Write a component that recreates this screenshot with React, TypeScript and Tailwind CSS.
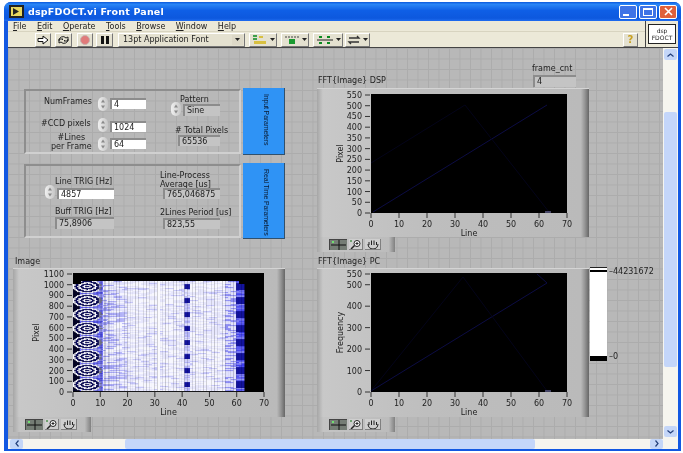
import type { ReactNode } from "react";

const FONT = "font-['DejaVu_Sans',sans-serif]";

// Hash noise so the intensity graph looks the same on each render
const noise = (a: number, b: number) => {
  const s = Math.sin(a * 12.9898 + b * 78.233) * 43758.5453;
  return s - Math.floor(s);
};

const ramp = (v: number) => {
  if (v < 0) return "rgb(128,128,146)"; // grey band next to the lobes
  // 0 = white, 0.7 = strong blue, 1 = near black
  if (v < 0.7) {
    const t = v / 0.7;
    return `rgb(${Math.round(250 - t * 222)},${Math.round(250 - t * 222)},${Math.round(255 - t * 20)})`;
  }
  const t = (v - 0.7) / 0.3;
  return `rgb(${Math.round(28 - t * 22)},${Math.round(28 - t * 22)},${Math.round(235 - t * 195)})`;
};

const intensity = (col: number, row: number) => {
  const period = 14;
  const phase = ((row + 1) % period) - 7; // -7..7, row counted from the bottom
  const blob = noise(Math.floor(col / 3 + noise(row, 7) * 3), row); // thin flat streaks
  if (col < 11) {
    const d = Math.sqrt(((col - 5) / 5.5) ** 2 + (phase / 6.5) ** 2);
    if (d > 1) return col < 2.5 ? 1 : 0.25 + blob * 0.3;
    if (col >= 9.5) return Math.abs(phase) < 5 && blob > 0.25 ? -1 : 0.3;
    return Math.cos(d * 17) > 0 ? 0.92 : 0.01;
  }
  const c = Math.floor(col);
  if (c === 31) return 0;
  if (c >= 41 && c <= 42) return Math.abs(phase) < 2.5 ? 0.82 : 0.05 + blob * 0.2;
  if (c >= 60) return Math.abs(phase) < 4 ? 0.82 : 0.3 + blob * 0.3;
  if (c >= 56) return blob < 0.4 ? 0.34 : 0.08;
  if (c < 20) return blob < 0.3 ? 0.3 - (c - 11) * 0.012 : blob < 0.7 ? 0.08 : 0.01;
  return blob < 0.12 ? 0.17 : blob < 0.6 ? 0.06 : 0.01;
};

const cells: { x: number; y: number; w: number; c: string }[] = [];
for (let col = 0; col < 63; col += col < 14 ? 0.5 : 1) {
  const w = col < 14 ? 1.36 : 2.72;
  for (let row = 0; row < 110; row++) {
    if (row > 106 && (col < 3 || col > 60)) continue;
    cells.push({ x: col * 2.72, y: row, w, c: ramp(intensity(col, row)) });
  }
}

type GraphProps = {
  className: string;
  yLabel: string;
  plotX: number;
  plotY: number;
  plotW: number;
  yTicks: { v: number; y: number }[];
  children?: ReactNode;
};

const PLOT_H = 119;
const xValues = [0, 10, 20, 30, 40, 50, 60, 70];

const Graph = ({ className, yLabel, plotX, plotY, plotW, yTicks, children }: GraphProps) => {
  const bottom = plotY + PLOT_H;
  const mid = plotX + plotW / 2;
  const labelX = 22.5;
  const labelY = plotY + PLOT_H / 2;
  return (
    <div
      className={`absolute h-[149px] w-[272px] border-t border-t-[#d4d4d4] bg-[linear-gradient(90deg,#a6a6a6_0,#c8c8c8_6px,#bebebe_40%,#bababa_97%,#949494_98.5%,#666_100%)] ${className}`}
    >
      <svg width="272" height="148" className="block" fontFamily="'DejaVu Sans',sans-serif" fontSize="8" fill="#222">
        <rect x={plotX} y={plotY} width={plotW} height={PLOT_H} fill="#000" />
        <g transform={`translate(${plotX} ${plotY})`}>{children}</g>
        {yTicks.map((t) => (
          <g key={t.v}>
            <line x1={plotX - 6} x2={plotX - 1} y1={plotY + t.y + 0.5} y2={plotY + t.y + 0.5} stroke="#333" />
            <text x={plotX - 9} y={plotY + t.y + 3.5} textAnchor="end">
              {t.v}
            </text>
          </g>
        ))}
        {xValues.map((v) => {
          const x = plotX + (v / 70) * plotW;
          return (
            <g key={v}>
              <line x1={x} x2={x} y1={bottom} y2={bottom + 5} stroke="#333" />
              <text x={x} y={bottom + 14} textAnchor="middle">
                {v}
              </text>
            </g>
          );
        })}
        <text x={mid} y={bottom + 23} textAnchor="middle">
          Line
        </text>
        <text x={labelX} y={labelY} textAnchor="middle" transform={`rotate(-90 ${labelX} ${labelY})`} dy="3">
          {yLabel}
        </text>
      </svg>
    </div>
  );
};

// Graph palette: cursor, zoom and hand buttons
const Palette = ({ className }: { className: string }) => (
  <div
    className={`absolute flex h-[15px] w-[78px] items-center gap-[2px] bg-[linear-gradient(90deg,#a8a8a8_0,#c4c4c4_8%,#bcbcbc_92%,#808080_100%)] pl-[12px] ${className}`}
  >
    <span className="h-[11px] w-[18px] border-t border-l border-t-[#444] border-l-[#444] bg-[#757d75]">
      <svg width="17" height="10" className="block">
        <path d="M9 0v10M1 5h15" stroke="#111" />
        <rect x="2" y="1" width="2" height="2" fill="#6fe06f" />
      </svg>
    </span>
    <span className="h-[11px] w-[14px] border-r border-b border-r-[#808080] border-b-[#808080] bg-[#cfcfcf]">
      <svg width="13" height="10" className="block">
        <circle cx="8" cy="4.5" r="3" fill="#fff" stroke="#222" />
        <path d="M5.5 6.5 2 10" stroke="#222" strokeWidth="1.5" />
        <path d="M6.5 4.5h3M8 3v3" stroke="#222" />
        <rect x="1" y="1" width="2" height="2" fill="#6fa06f" />
      </svg>
    </span>
    <span className="h-[11px] w-[16px] border-r border-b border-r-[#808080] border-b-[#808080] bg-[#cfcfcf]">
      <svg width="15" height="10" className="block">
        <path d="M4 6V3M6.5 6V1.5M9 6V1.5M11.5 6V3M3 5c0 3 2 5 5 5s5-2 5-5" fill="none" stroke="#222" />
      </svg>
    </span>
  </div>
);

const Spinner = ({ className }: { className: string }) => (
  <div className={`absolute h-[14px] w-[10px] rounded-full bg-[linear-gradient(90deg,#f0f0f0,#c6c6c6)] ${className}`}>
    <svg width="10" height="14" className="block">
      <path d="M5 2.5 3 5.5h4zM5 11.5 3 8.5h4z" fill="#8a8a8a" />
    </svg>
  </div>
);

const Field = ({ className, value, indicator }: { className: string; value: string; indicator?: boolean }) => (
  <div
    className={`absolute flex items-center border-t-2 border-l-2 border-t-[#8c8c8c] border-l-[#8c8c8c] pl-[2px] text-[8px] leading-none text-[#222] ${
      indicator ? "bg-[#c4c4c4]" : "bg-white"
    } ${className}`}
  >
    {value}
  </div>
);

const Label = ({ className, children }: { className: string; children: ReactNode }) => (
  <div className={`absolute whitespace-nowrap text-[8px] leading-[8.5px] text-[#222] ${className}`}>{children}</div>
);

const Tab = ({ className, children }: { className: string; children: string }) => (
  <div
    className={`absolute w-[42px] border-r border-b border-r-[#30506c] border-b-[#30506c] bg-[#2f93f5] pt-[6px] ${className}`}
  >
    <div className="ml-[19px] font-['Liberation_Sans',sans-serif] text-[7px] leading-[8px] tracking-[-0.15px] whitespace-nowrap text-[#0a1a30] [writing-mode:vertical-rl]">
      {children}
    </div>
  </div>
);

const ToolButton = ({ className, children }: { className: string; children: ReactNode }) => (
  <div
    className={`flex h-[14px] items-center justify-center border border-t-white border-l-white border-r-[#777] border-b-[#777] bg-[#e4e1d0] ${className}`}
  >
    {children}
  </div>
);

const Caret = () => (
  <svg width="5" height="3" className="ml-[2px]">
    <path d="M0 0h5L2.5 3z" fill="#222" />
  </svg>
);

const imageTicks = [1100, 1000, 900, 800, 700, 600, 500, 400, 300, 200, 100, 0].map((v) => ({
  v,
  y: 118.5 - (v / 1100) * 118,
}));
const dspTicks = [550, 500, 450, 400, 350, 300, 250, 200, 150, 100, 50, 0].map((v) => ({
  v,
  y: 118.5 - (v / 550) * 118,
}));
const pcTicks = [550, 500, 400, 300, 200, 100, 0].map((v) => ({
  v,
  y: 118.5 - (v / 550) * 118,
}));

const menuItems = ["File", "Edit", "Operate", "Tools", "Browse", "Window", "Help"];

export default function App() {
  return (
    <div className={`h-[453px] w-[683px] overflow-hidden bg-white pt-[2px] pr-[2px] pb-[2px] pl-[4px] ${FONT} blur-[0.4px]`}>
      <div className="flex h-full flex-col rounded-t-[7px] bg-[#1258e2] pr-[3px] pb-[2px] pl-[4px]">
        {/* Title bar */}
        <div className="-ml-[4px] -mr-[3px] flex h-[19px] shrink-0 items-center rounded-t-[7px] bg-[linear-gradient(180deg,#0a58dc,#2a86f6_12%,#0f5fe6_45%,#0d58de_85%,#1f6cf0)] pl-[5px]">
          <svg width="15" height="13" className="mr-[4px]">
            <rect width="15" height="13" fill="#222" />
            <rect x="2" y="2" width="11" height="9" fill="#e8d860" />
            <path d="M4 3l6 3.5L4 10z" fill="#222" />
          </svg>
          <span className="text-[9.5px] leading-none font-bold tracking-[0.2px] text-white">dspFDOCT.vi Front Panel</span>
          <div className="ml-auto mr-[4px] flex gap-[2px]">
            <span className="flex h-[14px] w-[18px] items-end rounded-[2px] border border-white bg-[#3f73e6] pb-[2px] pl-[3px]">
              <span className="h-[2px] w-[6px] bg-white" />
            </span>
            <span className="flex h-[14px] w-[18px] items-center justify-center rounded-[2px] border border-white bg-[#3f73e6]">
              <span className="h-[8px] w-[10px] border border-t-2 border-white" />
            </span>
            <span className="flex h-[14px] w-[18px] items-center justify-center rounded-[2px] border border-white bg-[#e0603a]">
              <svg width="9" height="9">
                <path d="M1 1l7 7M8 1 1 8" stroke="#fff" strokeWidth="1.6" />
              </svg>
            </span>
          </div>
        </div>

        {/* Menu and toolbar with the VI icon on the right */}
        <div className="flex h-[27px] shrink-0 border-b border-b-[#444] bg-[#ece9d8]">
          <div className="flex min-w-0 flex-1 flex-col">
            <div className="flex h-[11px] items-center gap-[10.5px] border-b border-b-[#d8d4c0] pt-[2px] pl-[5px] text-[8px] leading-none text-[#222]">
              {menuItems.map((m) => (
                <span key={m}>
                  <u>{m[0]}</u>
                  {m.slice(1)}
                </span>
              ))}
            </div>
            <div className="flex flex-1 items-center pl-[27px]">
              <ToolButton className="w-[16px]">
                <svg width="12" height="10">
                  <path d="M1 3.5h5V1l5 4-5 4V6.5H1z" fill="#fff" stroke="#111" />
                </svg>
              </ToolButton>
              <ToolButton className="ml-[4px] w-[17px]">
                <svg width="13" height="10">
                  <path d="M2 6a4 4 0 0 1 7-3l2-1v4H7l1-1M11 4a4 4 0 0 1-7 3L2 8V4h4L5 5" fill="none" stroke="#222" />
                </svg>
              </ToolButton>
              <ToolButton className="ml-[5px] w-[16px]">
                <span className="h-[10px] w-[10px] rounded-full border border-[#c8b0b0] bg-[#e07a7a]" />
              </ToolButton>
              <ToolButton className="ml-[3px] w-[17px]">
                <span className="h-[8px] w-[3px] bg-[#111]" />
                <span className="ml-[2px] h-[8px] w-[3px] bg-[#111]" />
              </ToolButton>
              <ToolButton className="ml-[5px] w-[127px] text-[8px] leading-none text-[#222]">
                <div className="flex w-full items-center justify-between pr-[1px] pl-[4px]">
                  <span>13pt Application Font</span>
                  <span className="flex h-[10px] w-[11px] items-center justify-center bg-[#ddd9c8]">
                    <svg width="5" height="3">
                      <path d="M0 0h5L2.5 3z" fill="#222" />
                    </svg>
                  </span>
                </div>
              </ToolButton>
              <ToolButton className="ml-[4px] w-[28px]">
                <svg width="16" height="10">
                  <path d="M1 1h4M1 4h4" stroke="#0a8a20" strokeWidth="1.4" />
                  <rect x="2" y="6" width="12" height="3" fill="#d8c040" />
                  <rect x="7" y="1" width="4" height="2" fill="#d8c040" />
                </svg>
                <Caret />
              </ToolButton>
              <ToolButton className="ml-[4px] w-[28px]">
                <svg width="16" height="10">
                  <path d="M1 2h14" stroke="#444" strokeDasharray="2 1" />
                  <rect x="5" y="4" width="6" height="5" fill="#1a9a30" />
                </svg>
                <Caret />
              </ToolButton>
              <ToolButton className="ml-[4px] w-[30px]">
                <svg width="18" height="10">
                  <path d="M1 5h16" stroke="#222" />
                  <path d="M3 2h3M3 8h3M11 2h3M11 8h3" stroke="#0a8a20" strokeWidth="2" />
                </svg>
                <Caret />
              </ToolButton>
              <ToolButton className="ml-[2px] w-[25px]">
                <svg width="14" height="10">
                  <path d="M2 3h10L10 1M12 7H2l2 2" fill="none" stroke="#333" strokeWidth="1.3" />
                </svg>
                <Caret />
              </ToolButton>
              <ToolButton className="ml-auto mr-[7px] w-[15px]">
                <span className="text-[10px] leading-none font-bold text-[#c8a020]">?</span>
              </ToolButton>
            </div>
          </div>
          <div className="flex w-[33px] shrink-0 items-center justify-center border-l border-l-[#444] bg-[#ece9d8]">
            <div className="flex h-[20px] w-[28px] flex-col items-center justify-center border border-[#222] bg-white text-[6px] leading-[7px] text-[#222]">
              <span>dsp</span>
              <span>FDOCT</span>
            </div>
          </div>
        </div>

        {/* Front panel and vertical scrollbar */}
        <div className="flex min-h-0 flex-1">
          <div className="relative h-[391px] w-[656px] overflow-hidden bg-[#b8b8b8] bg-[linear-gradient(#acacac_1px,transparent_1px),linear-gradient(90deg,#acacac_1px,transparent_1px)] bg-[size:10.5px_10.5px]">
            {/* Input parameters */}
            <div className="absolute top-[41px] left-[16px] h-[65px] w-[217px] border-2 border-t-[#8e8e8e] border-r-[#d0d0d0] border-b-[#d0d0d0] border-l-[#8e8e8e]" />
            <Tab className="top-[40px] left-[235px] h-[67px]">Input Parameters</Tab>
            <Label className="top-[50px] left-[36px]">NumFrames</Label>
            <Spinner className="top-[49px] left-[90px]" />
            <Field className="top-[50px] left-[102px] h-[11px] w-[36px]" value="4" />
            <Label className="top-[72px] left-[33px]">#CCD pixels</Label>
            <Spinner className="top-[70px] left-[90px]" />
            <Field className="top-[73px] left-[102px] h-[11px] w-[36px]" value="1024" />
            <Label className="top-[86px] left-[43px] text-center">
              #Lines
              <br />
              per Frame
            </Label>
            <Spinner className="top-[89px] left-[90px]" />
            <Field className="top-[90px] left-[102px] h-[11px] w-[36px]" value="64" />
            <Label className="top-[48px] left-[172px]">Pattern</Label>
            <Spinner className="top-[54px] left-[163px]" />
            <Field className="top-[56px] left-[175px] h-[12px] w-[37px]" value="Sine" indicator />
            <Label className="top-[79px] left-[167px]">#&nbsp;Total Pixels</Label>
            <Field className="top-[87px] left-[170px] h-[11px] w-[42px]" value="65536" indicator />

            {/* Real time parameters */}
            <div className="absolute top-[116px] left-[16px] h-[74px] w-[217px] border-2 border-t-[#8e8e8e] border-r-[#d0d0d0] border-b-[#d0d0d0] border-l-[#8e8e8e]" />
            <Tab className="top-[115px] left-[235px] h-[76px]">Real Time Parameters</Tab>
            <Label className="top-[130px] left-[47px]">Line TRIG [Hz]</Label>
            <Spinner className="top-[137px] left-[37px]" />
            <Field className="top-[140px] left-[49px] h-[11px] w-[57px]" value="4857" />
            <Label className="top-[160px] left-[47px]">Buff TRIG [Hz]</Label>
            <Field className="top-[169px] left-[47px] h-[12px] w-[59px]" value="75,8906" indicator />
            <Label className="top-[124px] left-[152px]">
              Line-Process
              <br />
              Average [us]
            </Label>
            <Field className="top-[140px] left-[155px] h-[11px] w-[57px]" value="765,046875" indicator />
            <Label className="top-[161px] left-[152px]">2Lines Period [us]</Label>
            <Field className="top-[170px] left-[155px] h-[11px] w-[57px]" value="823,55" indicator />

            {/* frame_cnt */}
            <Label className="top-[17px] left-[524px]">frame_cnt</Label>
            <Field className="top-[27px] left-[525px] h-[12px] w-[43px]" value="4" indicator />

            {/* Image graph */}
            <Label className="top-[210px] left-[7px]">Image</Label>
            <Graph className="top-[220px] left-[5px]" yLabel="Pixel" plotX={60} plotY={4} plotW={191} yTicks={imageTicks}>
              {cells.map((c, i) => (
                <rect key={i} x={c.x} y={118 - c.y - 1} width={c.w + 0.1} height="1.1" fill={c.c} />
              ))}
            </Graph>
            <Palette className="top-[369px] left-[5px]" />

            {/* FFT DSP graph */}
            <Label className="top-[29px] left-[310px]">FFT{"{Image}"} DSP</Label>
            <Graph className="top-[40px] left-[309px]" yLabel="Pixel" plotX={54} plotY={5} plotW={196} yTicks={dspTicks}>
              <path d="M2 118 176 11" stroke="#0c0c44" fill="none" />
              <path d="M0 69 94 11 178 118" stroke="#04041a" fill="none" />
              <path d="M174 118h6" stroke="#8888c8" />
            </Graph>
            <Palette className="top-[189px] left-[309px]" />

            {/* FFT PC graph */}
            <Label className="top-[210px] left-[310px]">FFT{"{Image}"} PC</Label>
            <Graph className="top-[220px] left-[309px]" yLabel="Frequency" plotX={54} plotY={4} plotW={196} yTicks={pcTicks}>
              <path d="M0 118 176 10 166 1" stroke="#0c0c44" fill="none" />
              <path d="M0 118 92 4 176 118" stroke="#04041a" fill="none" />
              <path d="M174 118h6" stroke="#8888c8" />
            </Graph>
            <Palette className="top-[369px] left-[309px]" />

            {/* Color ramp */}
            <div className="absolute top-[219px] left-[582px] flex h-[94px] w-[17px] flex-col border-t border-t-[#222] bg-white">
              <span className="mt-[2px] h-[2px] w-full bg-black" />
              <span className="flex-1" />
              <span className="h-[5px] w-full bg-black" />
            </div>
            <Label className="top-[220px] left-[601px]">–44231672</Label>
            <Label className="top-[305px] left-[601px]">–0</Label>
          </div>

          {/* Vertical scrollbar */}
          <div className="flex w-[15px] flex-col items-center bg-[#f6f5ef] py-[1px]">
            <div className="flex h-[11px] w-[13px] items-center justify-center rounded-[2px] bg-[#c4d6f8]">
              <svg width="7" height="4">
                <path d="M0.5 3.5 3.5 1l3 2.5" fill="none" stroke="#24407c" strokeWidth="1.2" />
              </svg>
            </div>
            <div className="mt-[52px] h-[255px] w-[13px] rounded-[2px] bg-[#c4d6fa]" />
            <div className="mt-auto flex h-[11px] w-[13px] items-center justify-center rounded-[2px] bg-[#c4d6f8]">
              <svg width="7" height="4">
                <path d="M0.5 0.5 3.5 3l3-2.5" fill="none" stroke="#24407c" strokeWidth="1.2" />
              </svg>
            </div>
          </div>
        </div>

        {/* Horizontal scrollbar */}
        <div className="flex h-[11px] shrink-0 items-center bg-[#f6f5ef] pl-[2px]">
          <div className="flex h-[10px] w-[13px] items-center justify-center rounded-[2px] bg-[#c4d6f8]">
            <svg width="4" height="7">
              <path d="M3.5 0.5 1 3.5l2.5 3" fill="none" stroke="#24407c" strokeWidth="1.2" />
            </svg>
          </div>
          <div className="ml-[102px] h-[10px] w-[410px] rounded-[2px] bg-[#c4d6fa]" />
          <div className="ml-auto mr-[15px] flex h-[10px] w-[13px] items-center justify-center rounded-[2px] bg-[#c4d6f8]">
            <svg width="4" height="7">
              <path d="M0.5 0.5 3 3.5l-2.5 3" fill="none" stroke="#24407c" strokeWidth="1.2" />
            </svg>
          </div>
        </div>
      </div>
    </div>
  );
}
